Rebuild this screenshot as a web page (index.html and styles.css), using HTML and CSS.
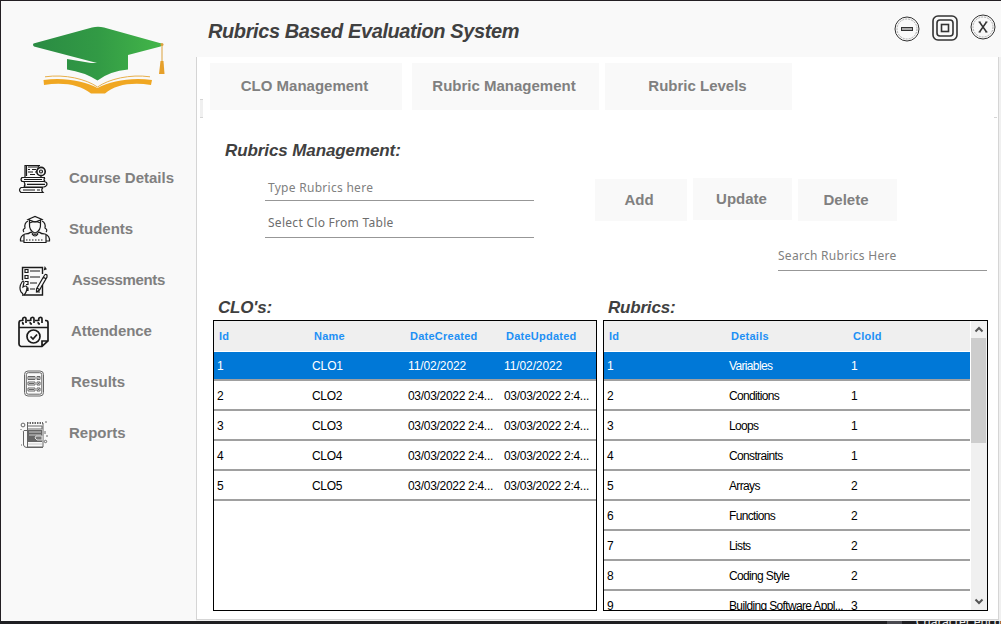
FILE: index.html
```html
<!DOCTYPE html>
<html lang="en">
<head>
<meta charset="utf-8">
<title>Rubrics Based Evaluation System</title>
<link rel="stylesheet" href="styles.css">
</head>
<body>
<div class="window">
  <aside class="sidebar">
    <svg class="logo" viewBox="30 20 140 80" width="140" height="80">
      <defs><linearGradient id="cap" x1="0" x2="1" y1="0" y2="0"><stop offset="0" stop-color="#2a8b43"/><stop offset=".5" stop-color="#329a45"/><stop offset="1" stop-color="#43b649"/></linearGradient></defs>
      <path fill="url(#cap)" d="M33.500 43.500 92 27.500Q98 26 104 27.500L161.500 43.500Q163 45 160.500 46.500L128 55V69.500Q110 71 97.500 80.500Q84 72 67 69.500V59L91 63H97L34 46.500Q32 45 33.500 43.500Z"/>
      <path fill="none" stroke="#dba13c" stroke-width="1" d="M162 45V62"/>
      <circle cx="162" cy="44.500" r="1.500" fill="#dba13c"/>
      <path fill="#e6a02b" d="M160.500 61H163.500L164.500 74H159Z"/>
      <path fill="#f0a722" d="M43.500 80C64 77 84 81 97.500 88C111 81 131 77 152 80L151 85C131 82 115 85 105 93.500H91C80 85 64 82 44 85Z"/>
      <path fill="none" stroke="#e8b04b" stroke-width="1" d="M45 76.800C65 74 86 79 97.500 87C109 79 130 74 150 76.800"/>
    </svg>
    <nav class="nav">
      <a class="item"><svg class="ico" viewBox="0 0 32 32"><path d="M7 14V2.500H22M8.500 2.500V13M10 4H20L21 2.500M23 12V14M10 6.500H12M14 6.500H18M10 9H15M17 9H18M12 11.500H17"/><circle cx="23" cy="8.500" r="4.200" stroke-width="1.700"/><circle cx="23" cy="8.500" r="1.500"/><path d="M27 14.500H4Q2 16.500 4 18.500H27M27 14.500Q25 16.500 27 18.500M6 18.500H26Q29 19 29 21T26 24H6M6 19Q8 21.500 6 24M3 24.500H25M25 24.500Q22.500 27 25 29.500H3Q0 27 3 24.500M6 16.500H24M9 21.300H27M5 27H17M19 27H22"/></svg><span>Course Details</span></a>
      <a class="item"><svg class="ico shift-student" viewBox="0 0 32 32"><path d="M9 5.500 16 2.500 23 5.500 16 8ZM10.500 6.500V10M21.500 6.500V10M10.500 9Q16 6.500 21.500 9M10.500 10Q10 17 16 19Q22 17 21.500 10M9 7Q5 9 6 14Q3 16 5 18M23 7Q27 9 26 14Q29 16 27 18M12 18Q10 20 6 20Q1 22 1.500 27H4.500M20 18Q22 20 26 20Q31 22 30.500 27H27.500M12 18Q16 23 20 18M13 20Q16 24 19 20M5 21V28.500H27V21"/><path d="M7 26H25" stroke-dasharray="1.500 1.500"/></svg><span>Students</span></a>
      <a class="item item-assess"><svg class="ico" viewBox="0 0 32 32"><path d="M4.500 15V2.500H24.500V9M24.500 20V30H4" stroke-width="1.400"/><path d="M7 4.500h3v3H7ZM7 10.500h3v3H7ZM7 16.500h3v3H8M10 22.500v3H8M12 6H22M12 12H22M12 18H19M12 24H17M27 2.500 28 4 26.500 4.500ZM29 10Q27 8.500 26 11L18.500 24V27L21.500 25 29 12ZM25 12 27.500 13.500M19 23 22 25M18 27H22M5 29 3 27Q.500 22 4 17Q5 15 6 17L5 22Q8 20 9 22Q9 27 6 30"/></svg><span>Assessments</span></a>
      <a class="item item-attend"><svg class="ico" viewBox="0 0 32 32"><g stroke-width="1.700"><path d="M4 4.500H3Q1 4.500 1 7V28Q1 30 3 30.500H24L30 25V7Q30 4.500 28 4.500H27M1 11.500H30M24 30.500V25H30M9 4.500H12M17 4.500H20"/><path d="M5 6Q4 8 6 8M8 7V3Q8 1 6 1.500Q4 2 5 5M12.500 6Q11.500 8 14 8M16 7V3Q16 1 14 1.500Q12 2 13 5M20.500 6Q19.500 8 22 8M24 7V3Q24 1 22 1.500Q20 2 21 5"/><circle cx="15.500" cy="20.500" r="6.500"/><path d="M12.500 20.500 15 23 19 18.500"/></g></svg><span>Attendence</span></a>
      <a class="item item-results"><svg class="ico gray" viewBox="0 0 32 32"><rect x="6.500" y="4" width="19" height="25" rx="3.500"/><rect x="8.300" y="5.700" width="15.500" height="21.500" rx="2"/><path d="M10 9.500H17V12.500H10ZM19 9.500H22V12.500H19ZM10 15H17V18H10ZM19 15H22V18H19ZM10 21H17V24H10ZM19 21H22V24H19ZM11 11H16M19.500 12 21.500 10M11 16.500H16M19.500 17.500 21.500 15.500M11 22.500H16M19.500 23.500 21.500 21.500"/></svg><span>Results</span></a>
      <a class="item"><svg class="ico gray" viewBox="0 0 32 32"><path fill="#666" stroke="none" d="M10 12H24V24H10Z"/><path d="M9.500 5V29H25V5" /><path stroke-dasharray="1.500 1" stroke-width="2" d="M9 5H25"/><path d="M9.500 8H24V11H9.500M9 12.500H6Q5 13 5.500 14V27Q6 29.500 9 29.500H25"/><path stroke="#ccc" d="M11 14H23M11 17H23M10 26H24"/><path stroke="#ddd" fill="#777" d="M18 18H24V22H19L17 20Z"/><circle cx="5" cy="7" r="1.900"/><circle cx="27.500" cy="23.500" r="1.200"/><path d="M27 4H29M27 13V16M29 17V19M3 11V12M3 27H4"/></svg><span>Reports</span></a>
    </nav>
  </aside>
  <div class="main">
    <header class="header">
      <h1>Rubrics Based Evaluation System</h1>
      <div class="controls">
        <svg class="ctl c-min" viewBox="0 0 26 26"><circle cx="13" cy="13" r="12"/><circle cx="13" cy="13" r="10" class="inner"/><rect x="7.500" y="11.500" width="11" height="3" fill="#aaa"/></svg>
        <svg class="ctl" viewBox="0 0 26 26"><g stroke-width="1.600"><rect x="1" y="1" width="24" height="24" rx="5"/><rect x="5" y="5" width="16" height="16" rx="3"/><rect x="9.500" y="9.500" width="7" height="7"/></g></svg>
        <svg class="ctl c-close" viewBox="0 0 26 26"><circle cx="13" cy="13" r="12"/><circle cx="13" cy="13" r="10" class="inner"/><path d="M9.500 8 16.500 18M16.500 8 9.500 18" stroke-width="1.500"/><path d="M8.500 8H10.500M15.500 8H17.500M8.500 18H10.500M15.500 18H17.500"/></svg>
      </div>
    </header>
    <section class="panel">
      <i class="grip"></i><i class="mark"></i>
      <div class="tabs">
        <button class="btn tab t1">CLO Management</button>
        <button class="btn tab t2">Rubric Management</button>
        <button class="btn tab t3">Rubric Levels</button>
      </div>
      <h2 class="heading">Rubrics Management:</h2>
      <div class="form">
        <div class="fields">
          <div class="field f1">Type Rubrics here</div>
          <div class="field f2">Select Clo From Table</div>
        </div>
        <div class="actions">
          <button class="btn add">Add</button>
          <button class="btn update">Update</button>
          <button class="btn delete">Delete</button>
        </div>
      </div>
      <div class="field search">Search Rubrics Here</div>
      <div class="grids">
        <div class="block clos">
          <h3>CLO's:</h3>
          <div class="table">
            <div class="rows">
              <div class="head row"><span>Id</span><span>Name</span><span>DateCreated</span><span>DateUpdated</span></div>
              <div class="row sel"><span>1</span><span>CLO1</span><span>11/02/2022</span><span>11/02/2022</span></div>
              <div class="row"><span>2</span><span>CLO2</span><span>03/03/2022 2:4...</span><span>03/03/2022 2:4...</span></div>
              <div class="row"><span>3</span><span>CLO3</span><span>03/03/2022 2:4...</span><span>03/03/2022 2:4...</span></div>
              <div class="row"><span>4</span><span>CLO4</span><span>03/03/2022 2:4...</span><span>03/03/2022 2:4...</span></div>
              <div class="row"><span>5</span><span>CLO5</span><span>03/03/2022 2:4...</span><span>03/03/2022 2:4...</span></div>
            </div>
          </div>
        </div>
        <div class="block rubrics">
          <h3>Rubrics:</h3>
          <div class="table">
            <div class="rows">
              <div class="head row"><span>Id</span><span>Details</span><span>CloId</span></div>
              <div class="row sel"><span>1</span><span>Variables</span><span>1</span></div>
              <div class="row"><span>2</span><span>Conditions</span><span>1</span></div>
              <div class="row"><span>3</span><span>Loops</span><span>1</span></div>
              <div class="row"><span>4</span><span>Constraints</span><span>1</span></div>
              <div class="row"><span>5</span><span>Arrays</span><span>2</span></div>
              <div class="row"><span>6</span><span>Functions</span><span>2</span></div>
              <div class="row"><span>7</span><span>Lists</span><span>2</span></div>
              <div class="row"><span>8</span><span>Coding Style</span><span>2</span></div>
              <div class="row"><span>9</span><span>Building Software Appl...</span><span>3</span></div>
            </div>
            <div class="scrollbar">
              <svg viewBox="0 0 16 17"><path d="M4.500 10.500 8 7 11.500 10.500"/></svg>
              <div class="thumb"></div>
              <svg class="down" viewBox="0 0 16 17"><path d="M4.500 6.500 8 10 11.500 6.500"/></svg>
            </div>
          </div>
        </div>
      </div>
    </section>
  </div>
</div>
<footer class="behind"><span class="stub"></span><span class="peek">Character enco</span></footer>
</body>
</html>
```
FILE: styles.css
```css
* { box-sizing: border-box; }
body { margin: 0; width: 1001px; height: 624px; overflow: hidden; background: #231f23; font-family: "Liberation Sans", Arial, sans-serif; }
.window { display: flex; width: 1000px; height: 620px; margin: 1px 0 0 1px; background: #f9f9f9; }
.sidebar { width: 195px; padding-top: 19px; }
.logo { display: block; margin-left: 29px; }
.nav { margin-top: 52px; }
.item { display: flex; align-items: center; height: 51px; padding-left: 17px; color: #808080; font-weight: bold; font-size: 15px; white-space: nowrap; }
.item span { margin-left: 19px; }
.item-assess span { margin-left: 22px; letter-spacing: -.35px; }
.item-attend span { margin-left: 21px; letter-spacing: -.1px; }
.item-results span { margin-left: 21px; }
.ico { width: 32px; height: 32px; fill: none; stroke: #1b1b1b; stroke-width: 1.2; margin-top: 2px; }
.shift-student { margin-left: 1px; margin-right: -1px; }
.gray { stroke: #666; stroke-width: 1; }
.main { width: 805px; display: flex; flex-direction: column; background: #f0f0f0; }
.header { height: 56px; display: flex; justify-content: space-between; background: #f9f9f9; }
h1, h2, h3 { margin: 0; color: #404040; font-style: italic; font-weight: bold; white-space: nowrap; }
h1 { font-size: 20px; line-height: 24px; letter-spacing: -.4px; padding: 18px 0 0 12px; }
.controls { display: flex; gap: 12px; padding: 14px 5px 0 0; }
.ctl { width: 26px; height: 26px; fill: none; stroke: #333; stroke-width: 1; }
.ctl .inner { stroke: #aaa; stroke-dasharray: 2 1; }
.c-min { margin-top: 1px; }
.c-close { margin-top: -1px; }
.panel { position: relative; width: 803px; height: 563px; background: #fff; border: 1px solid #d5d5d5; border-top: 0; padding: 6px 0 0 13px; }
.grip { position: absolute; left: 3px; top: 42px; width: 3px; height: 19px; background: #f0f0f0; border: solid #d5d5d5; border-width: 1px 0; }
.mark { position: absolute; right: 1px; top: 60px; width: 3px; height: 1px; background: #d5d5d5; }
.tabs { display: flex; }
.btn { border: 0; padding: 0 0 2px; background: #f9f9f9; color: #808080; font: bold 15px "Liberation Sans", Arial, sans-serif; }
.tab { height: 47px; }
.t1 { width: 192px; padding-right: 3px; }
.t2 { width: 187px; margin-left: 10px; padding-right: 3px; }
.t3 { width: 187px; margin-left: 6px; padding-right: 2px; }
.heading { font-size: 17px; line-height: 20px; letter-spacing: -.1px; margin: 31px 0 0 15px; }
.form { display: flex; height: 78px; margin-top: 16px; }
.fields { width: 269px; margin-left: 55px; }
.field { color: #808080; font: 12px/16px "Noto Sans", sans-serif; letter-spacing: .28px; border-bottom: 1px solid #979797; padding-left: 3px; white-space: nowrap; }
.f1 { height: 24px; padding-top: 3px; }
.f2 { height: 37px; padding-top: 14px; color: #6d6d6d; }
.actions { display: flex; margin-left: 61px; }
.actions .btn { height: 42px; margin-top: 2px; }
.add { width: 92px; padding-right: 4px; }
.actions .update { width: 99px; margin: 1px 6px 0; padding-right: 2px; }
.delete { width: 99px; padding-right: 3px; }
.search { width: 209px; height: 26px; padding-left: 0; padding-top: 3px; margin-left: 568px; margin-top: -10px; }
.grids { display: flex; gap: 6px; margin-left: 3px; margin-top: 27px; }
h3 { font-size: 17px; line-height: 20px; height: 22px; letter-spacing: -.2px; padding-left: 5px; }
.block { width: 384px; }
.rubrics { width: 385px; }
.table { display: flex; height: 291px; border: 1px solid #000; overflow: hidden; background: #fff; }
.rows { flex: 1; }
.row { display: grid; grid-template-columns: 94px 96px 96px 96px; height: 30px; border-bottom: 2px solid #a0a0a0; line-height: 30px; font-size: 12px; color: #000; white-space: nowrap; }
.rubrics .row { grid-template-columns: 122px 122px 122px; letter-spacing: -.65px; }
.row span { padding-left: 4px; }
.clos .row { letter-spacing: -.3px; }
.clos .row span:first-child, .rubrics .row span { padding-left: 3px; }
.table .sel { background: #0078d7; color: #fff; border-top: 1px solid #fff; line-height: 28px; }
.clos .sel { letter-spacing: -.1px; }
.table .head { border: 0; background: #efefef; color: #1e90f5; font-weight: bold; font-size: 11px; letter-spacing: .25px; }
.table .head span, .clos .head span:first-child { padding-left: 5px; }
.clos .head span:not(:first-child) { padding-left: 6px; }
.scrollbar { width: 17px; border-left: 1px solid #fff; background: #f0f0f0; display: flex; flex-direction: column; }
.scrollbar svg { width: 16px; height: 17px; fill: none; stroke: #555; stroke-width: 2; flex: none; }
.thumb { width: 15px; height: 105px; background: #cdcdcd; }
.down { margin-top: auto; }
.behind { display: flex; height: 3px; overflow: hidden; background: #1f1f22; color: #eee; }
.stub { width: 20px; margin: 0 14px 0 887px; background: #4a4a50; }
.peek { font: 12px/14px "Noto Sans", sans-serif; margin-top: -6px; white-space: nowrap; }
```
